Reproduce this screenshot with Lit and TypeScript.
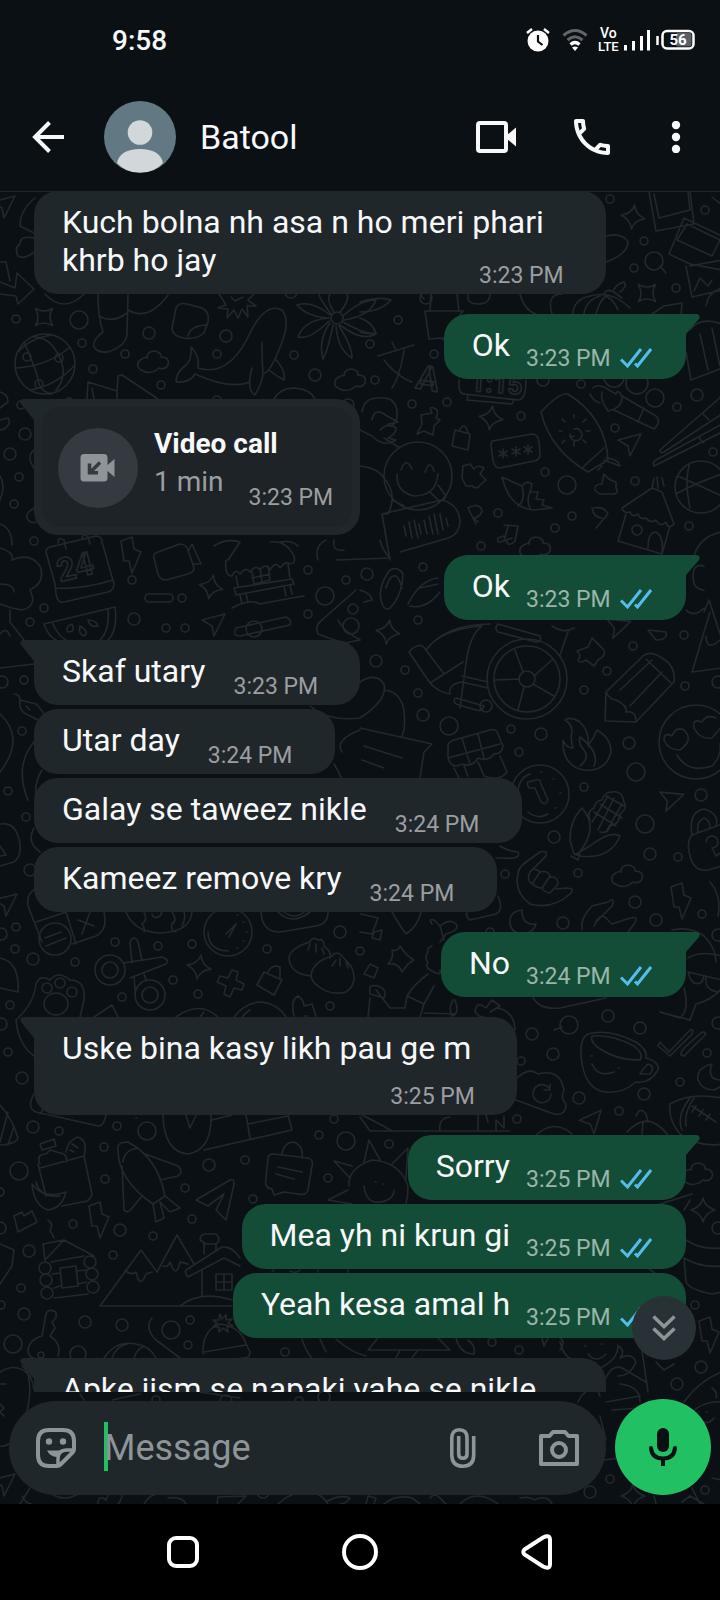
import { LitElement, html, svg, css } from "lit";
import { customElement, property } from "lit/decorators.js";

type Message = {
  side: "in" | "out";
  text: string;
  time: string;
  first?: boolean;
  layout?: "wrap" | "stack";
  call?: boolean;
};

const MESSAGES: Message[] = [
  { side: "in", text: "Kuch bolna nh asa n ho meri phari khrb ho jay", time: "3:23 PM", layout: "wrap" },
  { side: "out", text: "Ok", time: "3:23 PM", first: true },
  { side: "in", text: "Video call", time: "3:23 PM", first: true, call: true },
  { side: "out", text: "Ok", time: "3:23 PM", first: true },
  { side: "in", text: "Skaf utary", time: "3:23 PM", first: true },
  { side: "in", text: "Utar day", time: "3:24 PM" },
  { side: "in", text: "Galay se taweez nikle", time: "3:24 PM" },
  { side: "in", text: "Kameez remove kry", time: "3:24 PM" },
  { side: "out", text: "No", time: "3:24 PM", first: true },
  { side: "in", text: "Uske bina kasy likh pau ge m", time: "3:25 PM", first: true, layout: "stack" },
  { side: "out", text: "Sorry", time: "3:25 PM", first: true },
  { side: "out", text: "Mea yh ni krun gi", time: "3:25 PM" },
  { side: "out", text: "Yeah kesa amal h", time: "3:25 PM" },
  { side: "in", text: "Apke jism se napaki yahe se nikle", time: "3:25 PM", first: true, layout: "wrap" },
];

/* Wallpaper doodles: small rings as [x, y, radius]. */
const RINGS: number[][] = [
  [16,319,4],[79,320,9],[149,333,6],[82,343,4],[125,354,4],[226,336,6],[217,354,4],[294,355,4],[315,375,6],[93,369,4],[161,385,4],[25,434,6],[10,454,6],[19,477,4],[14,504,4],[34,541,4],[291,292,6],[21,405,4],[69,402,4],[217,400,4],[348,405,6],
  [610,199,4],[705,210,4],[644,241,4],[634,268,4],[654,261,9],[676,288,4],[398,320,4],[370,344,4],[375,380,4],[434,354,4],[412,404,4],[447,402,4],[581,384,4],[521,416,4],[615,428,4],[677,407,4],[697,395,6],[655,398,9],[543,380,6],[545,472,4],[567,485,9],[635,481,4],[713,452,4],[498,513,4],[572,516,4],[555,528,4],[689,526,4],[481,546,4],[614,377,10],[637,383,11],[426,298,6],
  [134,619,6],[166,628,4],[185,628,4],[132,580,4],[44,608,4],[30,622,4],[308,570,4],[346,580,4],[325,596,9],[308,614,4],[24,680,4],[22,731,4],[8,791,4],[26,817,4],[30,870,6],[16,927,4],[182,598,4],[2,682,6],[353,609,5],[351,626,8],
  [423,567,4],[367,574,6],[418,620,4],[376,661,6],[405,670,4],[418,693,4],[423,715,6],[449,726,9],[511,729,4],[541,734,6],[519,752,4],[584,690,4],[607,671,4],[633,646,4],[684,635,4],[685,686,4],[718,682,6],[629,743,6],[636,772,9],[584,787,4],[701,795,6],[645,824,9],[554,837,6],[505,874,4],[578,873,4],[650,854,6],[678,857,4],[635,902,6],[702,914,4],[656,920,6],[563,923,6],
  [1,934,6],[15,949,4],[33,959,6],[75,962,4],[115,942,4],[158,946,4],[192,944,4],[173,980,4],[122,997,4],[198,994,4],[267,949,4],[340,932,6],[330,1006,4],[1,1024,6],[10,1005,4],[8,1052,4],[22,1078,6],[33,1127,6],[59,1131,4],[117,1126,4],[147,1131,9],[104,1147,4],[19,1171,9],[105,1179,4],[209,1165,6],[245,1160,4],[185,1188,4],[319,1135,4],[346,1141,9],[328,1178,4],[253,1199,4],[192,1219,4],[120,1230,6],[153,1236,4],[73,1224,4],[29,1251,6],[113,1255,4],[21,1288,4],[334,1119,4],[0,1192,4],[0,1228,6],
  [569,1025,9],[608,1016,6],[640,1028,6],[532,1034,6],[553,1054,6],[521,1061,4],[579,1098,6],[644,1094,6],[619,1111,4],[707,1053,4],[680,1082,4],[517,1119,4],[389,1144,4],[718,1228,6],[718,1023,6],[718,935,6],[360,951,4],[490,932,4],
  [24,1314,6],[13,1344,9],[78,1354,8],[85,1322,6],[122,1325,6],[171,1330,9],[190,1320,4],[188,1345,4],[285,1352,4],[492,1342,4],[519,1350,4],[695,1305,4],[701,1367,6],[677,1384,6],[610,1479,4],[705,1490,4],[590,1492,6],[156,1400,4],[226,1401,6],[299,1401,4],[324,1397,6],[263,1492,6],[1,1305,4],
];
/* Four-pointed sparkles, clouds, bolts and arrowheads as [x, y, rotation]. */
const SPARKS = [[44,317,45],[633,217,8],[491,418,8],[647,293,45],[211,587,12],[388,632,8],[199,967,10],[703,1210,0],[633,1496,0]];
const CLOUDS = [[153,362,0],[350,380,0],[627,876,0],[697,1174,0],[535,548,0]];
const BOLTS = [[130,551,0],[680,897,0],[98,1216,0],[708,1331,0]];
const DARTS = [[214,624,0],[630,444,0],[670,800,20],[4,206,0],[592,1122,-10],[617,627,20],[4,1484,0],[6,904,0]];

/* Free-hand doodles. */
const DOODLES = [
  // globe
  "M15 364a30 30 0 1 0 60 0a30 30 0 1 0-60 0M24 342Q38 374 39 384Q42 392 52 394M33 337Q50 336 60 358Q68 376 56 390M18 352Q30 338 52 335M16 368Q48 366 70 347M30 390Q55 386 74 366M23 357a4 4 0 1 0 8 0a4 4 0 1 0-8 0M55 358a4 4 0 1 0 8 0a4 4 0 1 0-8 0M35 384a4 4 0 1 0 8 0a4 4 0 1 0-8 0",
  // sock, sticker, burst
  "M98 293Q98 318 103 332Q92 340 94 347Q98 353 108 352Q126 346 127 334L128 295M99 316Q112 324 127 313M128 310Q148 322 168 295M45 294Q64 314 84 294",
  "M176 308Q179 302 187 304L202 308Q210 312 208 322L204 333Q196 340 184 338Q172 336 172 328ZM188 336Q190 326 206 325",
  "M219 294L226 305L218 308L228 309L227 318L234 310L238 318L242 309L248 317L247 306L256 306L248 300L254 294M231 297L235 301L243 297",
  // whale
  "M191 347Q200 356 198 368Q230 378 251 331Q266 302 282 310Q292 322 278 352Q270 372 263 374Q262 383 255 395Q246 390 252 368M191 347Q192 360 186 365Q176 372 176 382Q190 383 195 374Q230 390 250 382M262 342Q262 360 263 374M275 359Q286 370 284 380Q276 376 269 370",
  // flower
  "M331 318a6 6 0 1 0 12 0a6 6 0 1 0-12 0M331 314Q318 296 319 294M334 312Q326 300 330 294M340 312Q350 300 347 294M343 316Q360 300 376 300Q370 316 344 320M343 322Q364 334 376 334Q362 342 340 325M339 326Q352 346 352 358Q338 350 336 326M333 325Q328 350 323 359Q318 340 330 323M329 321Q310 340 298 337Q304 320 329 318M330 315Q312 300 297 305Q306 316 326 318",
  // open box and arrow on the left edge
  "M0 282L15 288L17 273L34 289L18 304L16 296L0 294M0 262L6 262L10 281M35 198Q20 210 20 226L34 233M34 238Q20 235 20 244Q14 248 18 256Q24 260 34 252M0 392Q8 394 8 402L0 408M0 420L8 418Q12 424 4 429L0 430M0 476Q6 486 0 500M34 508Q24 514 28 520Q32 524 36 522M34 450Q26 456 34 468M0 524Q12 528 12 545",
  // cat ears
  "M87 399L88 382L117 391L118 376L122 375L158 399M117 391L117 399M94 399L92 388M274 399Q280 388 294 388Q310 389 315 399",
  // photo frames
  "M649 192L656 231L694 224L690 192M654 194L659 218L690 210L688 192M684 218L722 236M684 218L669 254L690 264L722 270M687 224L720 240L712 256L677 240ZM686 266L692 297L722 290M694 291L700 278L708 286L712 280M690 266L722 260M706 306Q708 292 722 288M712 197L722 205",
  "M660 266L666 273M606 236Q622 232 628 242Q628 254 606 262",
  // pumpkin
  "M573 314Q573 300 590 296Q612 290 630 308M584 314Q586 300 600 296M596 314Q600 300 606 296M618 310Q614 300 606 296M604 294Q606 288 614 292L622 298M614 290Q616 284 624 282Q628 286 620 292",
  "M652 314L664 306L682 303L681 316M552 314Q546 294 562 294M520 294Q524 310 536 314M468 294Q466 304 478 304Q490 304 490 294",
  // pot plant
  "M431 294L430 311L459 311L457 294M425 311L463 311L443 340M425 311L429 339L443 338M424 299Q420 296 422 294M360 302Q380 296 391 300Q380 312 360 312M360 318Q372 322 376 333Q366 334 360 332",
  // drink glass
  "M690 330Q700 316 722 324M686 352L691 380L722 368M700 334L708 370M712 328L720 366",
  // chat faces
  "M362 412Q364 398 378 398Q396 396 397 412Q398 424 390 426M360 430L372 436Q384 448 396 440L388 438Q396 434 396 428Q388 422 380 430M372 420Q374 408 384 414Q390 418 398 422L388 424M384 438L400 448",
  "M384 476a34 34 0 1 0 68 0a34 34 0 1 0-68 0M401 470Q406 456 412 469M425 472Q430 458 434 471M397 474Q396 492 414 496Q436 496 438 474M430 492L438 500Q444 502 446 496L438 485M360 466Q378 468 384 478Q398 494 388 514L382 514L390 560M382 514L442 500Q458 504 460 520Q460 534 448 538L400 552M404 526l2 10M409 522l3 16M414 520l4 18M419 524l2 10M424 520l3 14M429 516l4 18M434 514l4 20M440 514l3 16M446 518l2 8M392 500L404 506",
  // clock frame beneath the reply
  "M459 380Q458 394 464 394L518 400Q526 400 526 380M468 395L467 400L512 404L514 399",
  // pin, padlock, password
  "M432 413Q428 406 434 408Q440 410 436 418L440 420L434 426L433 435L424 431L417 434L422 424L421 415ZM455 430L470 434L468 450L452 446ZM460 430Q462 424 466 427L468 433M492 441L532 434Q538 434 539 442L540 454Q540 460 534 461L500 468Q494 468 493 460L491 446Q491 442 492 441M503 449v9M499 451l8 5M507 451l-8 5M516 447v9M512 449l8 5M520 449l-8 5M528 445v9M524 447l8 5M532 447l-8 5",
  // surfboard
  "M541 412Q560 392 568 394Q606 418 608 460L588 472Q550 450 541 412M582 468L604 448M574 429a6 6 0 1 1-4 5Q570 438 574 436M574 418v-3M574 442v4M562 431h-3M586 431h4M565 422l-3-3M583 422l3-3M565 440l-3 3M583 440l3 3M604 460L620 466L618 462Q612 458 606 458M602 466L598 470",
  // plaster
  "M593 388Q596 384 604 387L616 394Q618 388 622 397Q622 408 608 411Q600 400 602 392M590 394Q592 400 600 403M622 396L656 416Q662 422 654 429L614 410M644 408L638 422",
  // puzzle, shell, notes, pins
  "M463 466L470 464L474 469Q478 464 484 468L480 474L486 480L480 485Q478 490 472 486L466 486L462 478ZM503 480Q500 476 504 478L522 486Q526 480 532 484L530 492L538 492L536 499L544 500L542 505L552 508L534 510Q510 508 503 480M522 486Q526 500 518 506M530 492Q526 500 530 508",
  "M504 525L518 526L515 541Q508 548 506 540L512 538M508 526L504 541Q496 544 498 538L504 536M468 508Q478 502 482 510Q482 516 474 518L478 522M468 508L476 524M594 508Q604 506 608 514L596 528M592 508Q594 518 602 518",
  "M595 490Q594 484 602 484L604 474Q608 480 616 482L616 488Q620 494 612 494L600 494Q596 492 595 490",
  // chopsticks, basketball
  "M722 396L660 450Q660 454 664 452L722 414M722 432L654 466Q652 462 656 460L722 424M703 414l6 6M698 437l6 6M675 487a26 26 0 1 0 52 0a26 26 0 1 0-52 0M690 463Q684 480 690 508M678 476L722 496M676 494Q694 484 722 474",
  // hut
  "M652 488L654 478M658 488L657 477M664 486L662 478M652 488L662 492L674 524Q668 530 666 522Q660 528 656 520Q650 524 646 518Q640 520 638 514Q632 518 630 512Q624 514 622 508L652 488M626 514L618 541L662 554L670 526M632 530a5 5 0 1 0 10 0a5 5 0 1 0-10 0M648 548Q648 532 656 532Q664 536 662 554M694 556Q700 536 722 532",
  // calendar
  "M55 584L46 552Q46 548 50 547L96 536Q102 536 102 542L114 584Q114 590 108 592L64 602Q58 604 56 594ZM56 588Q80 590 113 580M58 543Q58 536 64 540L66 549M82 538Q84 532 88 537L90 544",
  // camera, watermelon, pill
  "M154 558Q152 554 158 552L180 544Q186 544 188 550L194 568Q194 572 188 574L166 580Q160 580 158 574ZM188 552L192 544L201 564L194 564M44 624L115 607Q118 630 108 640M44 624Q48 636 56 640M52 622Q58 636 66 640M108 609Q110 630 100 640M72 624Q64 628 68 632Q76 632 72 624M80 626Q78 634 84 636Q90 632 80 626M88 620Q90 628 98 626Q96 620 88 620",
  "M149 594h20a4 4 0 0 1 0 8h-20a4 4 0 0 1 0-8M236 628L286 617Q292 620 290 625L240 636Q232 636 236 628M246 629a8 8 0 1 0 16 0a8 8 0 1 0-16 0M0 584Q14 584 14 592M0 548Q14 552 12 560Q30 552 40 566Q46 582 30 590Q38 606 22 610L12 608L0 604M10 610L10 622L24 640M0 634Q6 626 10 636",
  // beach bar
  "M214 546Q226 538 240 542L228 560M226 560Q224 576 232 576Q236 568 240 574Q246 566 250 572Q256 564 260 570Q266 562 270 570Q276 560 280 568Q286 560 290 564Q296 564 294 556Q286 540 270 542M236 576L238 586M288 564L290 578M252 572L254 584L270 580L268 566M260 568L262 582M252 578L270 574M234 588L292 579L294 584L236 595ZM240 595L242 604M246 594L248 602M284 586L286 596M290 585L292 594M232 608Q250 598 260 604Q280 600 304 596M280 542Q292 540 298 546",
  // rocks and bottle
  "M318 560Q314 546 326 540M334 540Q332 552 344 550M336 560L390 558Q382 550 380 540M318 634Q314 626 322 620L356 590M338 620Q342 630 360 640M318 634L340 642",
  // sandals
  "M381 600Q378 586 390 570Q398 566 403 574Q402 596 390 608Q384 612 381 600M386 588Q390 574 396 576Q400 580 402 588M408 604Q420 580 438 578M410 606Q426 610 440 592M420 588L438 584M360 590Q372 594 372 600L364 602",
  // vegetables under the left column
  "M0 714Q26 738 0 772M14 694Q20 694 20 700Q18 712 30 716L38 720M20 700L36 704Q44 712 46 718M26 706l4 4M34 742Q14 766 28 800M42 770Q34 782 36 800M0 824Q14 822 18 836Q24 854 14 862L0 866M0 846L6 855L0 856M34 828Q26 842 40 852M0 668L34 664",
  // cap and wheelchair
  "M409 652Q420 640 426 650Q440 630 480 626M409 652L430 683L463 662M426 650L444 674M426 650Q446 624 490 624M460 708L466 663Q470 634 482 626M430 683Q438 692 450 694Q448 684 462 682L488 688M462 676L488 682M456 698L484 706Q482 712 476 710L456 704Q452 700 456 698M480 706a6 6 0 1 0 12 0a6 6 0 1 0-12 0M498 624L540 636Q542 642 536 642L498 632Q494 628 498 624",
  "M487 679a40 40 0 1 0 80 0a40 40 0 1 0-80 0M494 679a33 33 0 1 0 66 0a33 33 0 1 0-66 0M519 679a8 8 0 1 0 16 0a8 8 0 1 0-16 0M519 679L494 680M523 672L515 650M534 676L552 660M533 684L554 696M524 687L518 710M568 632L560 655M552 626Q564 634 574 628",
  // puzzle, pencil
  "M577 651L588 647L592 638L604 650Q606 656 598 660L594 666L586 660Q580 664 578 660Q582 656 577 651M605 721L606 692L643 656Q650 650 662 658Q676 666 674 682L636 722ZM606 692Q610 700 616 700Q628 706 626 712Q636 710 636 722M646 659L672 684M620 690L652 660M630 706L662 672M648 630L666 632Q668 640 656 640Z",
  // tree
  "M709 600L722 640M709 600L704 612M710 612L692 672L722 668M706 636Q706 652 720 640M686 610Q694 618 704 608M704 566Q690 562 694 584Q698 590 704 590",
  // heart card
  "M360 682Q376 672 384 684Q388 700 360 718M384 690Q408 692 404 730L402 736M360 728L432 744L424 752L420 778M364 746L402 758M362 760L384 768M330 646L360 640M334 764Q344 780 344 790M342 752Q334 740 360 730M310 706Q330 722 360 718",
  // gift
  "M448 746Q448 742 454 740L490 730Q496 728 498 734L503 746Q502 754 494 754Q488 762 478 758Q472 768 462 764Q452 770 448 758ZM462 738L470 764M478 734L484 758M448 758L500 744M454 768L460 780M500 756L507 772Q500 782 484 776L478 762M464 766L468 776",
  // flame
  "M565 720Q570 716 580 722Q590 732 588 746Q594 738 597 730Q611 738 611 752Q606 772 584 770Q562 766 563 740Q566 748 573 748Q570 738 572 732Q572 724 565 720M580 737Q578 744 584 750Q590 758 580 766M580 737Q600 752 594 766",
  // heart-eyes emoji
  "M659 742a37 37 0 1 0 74 0a37 37 0 1 0-74 0M664 740Q664 732 672 736Q676 726 684 730Q694 740 680 750Q668 750 664 740M694 728Q692 718 702 722Q706 714 716 718M694 728Q700 740 712 738L722 726M677 755Q688 774 712 766Q722 756 720 744",
  // clock coin
  "M511 794a29 29 0 1 0 58 0a29 29 0 1 0-58 0M528 782L536 780Q540 778 541 784L548 800Q546 806 541 802L535 788L530 788Q526 786 528 782M518 794Q518 778 530 774M528 812Q538 820 548 814M541 772h1M553 779h1M560 793h1M555 808h1",
  // corn
  "M582 808Q570 820 570 840L574 854L580 856Q610 860 620 836Q610 830 590 846L576 854M582 808Q600 828 578 854M590 820Q586 812 594 808Q596 800 602 800Q604 792 612 792Q622 790 624 802Q628 808 620 814Q620 824 610 826Q608 834 600 832M594 812L616 826M600 804L622 818M606 796L624 806M598 830L614 798M592 822L608 796M606 832L622 804M571 856L578 860L580 854",
  // lock
  "M692 835Q688 812 704 809Q720 814 716 826M698 832Q696 822 704 818Q710 820 710 828M692 835L722 824M692 835Q686 842 690 856Q694 872 708 870L722 866M706 842a6 6 0 1 1 6 6L716 856L722 852",
  // hands
  "M518 874Q518 868 526 862L540 852Q548 850 546 856L530 872M518 874Q514 892 530 904Q552 910 570 894Q576 888 566 888L556 889M530 872Q534 866 540 872L532 884Q526 880 530 872M540 872Q548 870 550 876L542 888Q536 888 533 884M550 877Q558 876 558 884L550 893Q544 892 542 888M582 930Q580 918 592 906L608 902Q616 896 612 906L596 922M594 926Q600 912 606 918L612 924L630 918Q640 916 634 924L622 940",
  "M500 846Q510 852 518 852Q522 860 500 858L496 858M498 896Q504 910 496 914L470 920Q464 916 468 910M392 912Q400 926 406 934Q418 926 421 912M710 882Q722 896 718 916",
  // crescents
  "M522 910Q508 912 510 924Q512 934 524 934Q534 932 536 924Q522 926 522 910M712 1064Q696 1068 698 1080Q702 1090 714 1090L722 1086M712 1064Q706 1080 722 1080",
  // capsule
  "M28 906Q26 890 40 888M28 906L42 942M36 922L66 912M39 939a16 16 0 1 0 32 0a16 16 0 1 0-32 0M45 938L61 932M46 946L66 938M66 912L76 944M104 912Q108 930 96 936L72 944M78 920L94 926M90 912L82 934M0 958Q20 962 18 992L0 988",
  // egg, stopwatch, camera
  "M126 912Q134 932 160 933Q190 932 192 912M144 912Q148 920 142 924Q146 930 144 932M152 914Q154 920 160 916Q164 912 158 910M172 912Q178 920 172 924Q170 930 176 932M184 912Q186 920 182 926M204 932a24 24 0 1 0 48 0a24 24 0 1 0-48 0M208 932Q208 950 228 951M226 934L236 924M229 937L236 924M237 915h1M243 922h1M246 932h1M243 941h1M237 948h1M261 912Q262 932 280 932L316 926Q328 924 328 912M278 912Q292 926 310 912M284 912Q294 920 304 912",
  // dumplings
  "M311 976Q290 974 289 958Q290 948 310 942Q312 936 318 940Q324 938 324 946Q332 952 330 958M311 976Q312 962 332 956Q336 950 342 956Q348 962 352 968Q358 984 346 992Q330 996 318 986Q312 982 311 976M310 944l-2 6M316 944v8M322 948l2 6M336 960l-4 6M340 958v8M346 962l2 6",
  // scissors
  "M95 970a15 15 0 1 0 30 0a15 15 0 1 0-30 0M102 970a8 8 0 1 0 16 0a8 8 0 1 0-16 0M135 995a15 15 0 1 0 30 0a15 15 0 1 0-30 0M142 995a8 8 0 1 0 16 0a8 8 0 1 0-16 0M124 963L162 957Q170 960 166 964L130 978M132 963L130 942Q134 934 138 942L142 960M135 990L134 976M146 980L144 974",
  // plus, tag, blocks
  "M232 970L238 972L236 980L244 984L242 990L234 988L230 997L224 994L226 986L217 982L220 976L228 978ZM264 972L282 980L274 995L257 985ZM268 972Q272 964 280 967L280 978M361 914L378 918L372 934L360 932M374 932L382 930L380 940L372 938ZM370 964L378 968L374 978L364 974ZM294 1016Q290 1000 298 996Q304 1000 304 1006L312 1004L316 1016M304 1016h3",
  "M400 946Q404 952 408 956L414 960L408 964L402 972Q398 962 388 964Q394 958 392 950Q398 952 400 946",
  // paw
  "M16 1020Q34 1004 36 984Q40 974 50 980Q58 970 70 980Q86 980 84 1000L80 1017M42 988a5 5 0 1 0 10 0a5 5 0 1 0-10 0M55 983a5 5 0 1 0 10 0a5 5 0 1 0-10 0M67 992a5 5 0 1 0 10 0a5 5 0 1 0-10 0M44 1004a12 11 0 1 0 24 0a12 11 0 1 0-24 0M16 1020Q18 1044 34 1056M94 1017L112 1005L118 1017M176 1017Q200 1000 218 1017M234 1017Q246 1002 262 1002Q278 1004 286 1017M200 1017L204 1012M250 1010Q246 1012 242 1017",
  // person juggling
  "M432 924Q428 918 434 920L440 926Q450 918 456 924Q460 930 446 934L440 942M440 926L444 940M432 946Q426 948 428 952Q424 958 428 962Q424 968 434 972Q442 976 440 970M428 974Q414 984 407 996L424 1004L434 986M407 996L405 1008L390 1008L376 990M424 1004L420 1017M370 990Q368 984 378 986Q388 990 384 998L370 994ZM368 1017L370 998M455 1014L424 1013M453 1000Q448 1008 452 1016Q460 1014 455 1000M475 1012Q476 1000 486 1008L492 1000L500 1006L490 1012M496 1008Q514 1010 515 1030M475 1012Q480 1018 484 1017",
  "M533 998Q540 1010 560 1008L606 998",
  // dancer at the right edge
  "M672 930Q690 926 704 936Q716 948 716 962M688 958Q700 950 722 956M688 972L722 980M688 972Q692 988 702 982L704 976M684 988Q690 1010 680 1018L660 1012M660 1012L690 1020L696 1004Q712 1000 722 988M706 976Q704 990 718 992",
  // cup
  "M581 1056Q580 1038 588 1034Q608 1028 636 1042Q648 1050 646 1058Q660 1062 658 1070Q650 1084 636 1082Q622 1094 606 1092Q584 1090 581 1056M592 1036Q612 1034 634 1046Q644 1054 640 1060Q614 1060 596 1046Q590 1040 592 1036M591 1056h1M618 1068h1M592 1064Q598 1078 614 1072M648 1064Q642 1070 640 1074L650 1074Q656 1066 648 1064M554 1030L562 1027",
  // ticks, football
  "M660 1042L669 1052L690 1030Q694 1028 692 1034L670 1056L658 1046ZM684 1048L702 1032Q708 1032 704 1036L684 1056Q678 1056 684 1048M670 1104Q690 1092 722 1098M670 1104Q668 1120 680 1134Q700 1148 722 1144M690 1098Q676 1116 682 1130M694 1098Q684 1112 686 1126M692 1106L716 1122M696 1106l-4 6M703 1110l-4 6M710 1114l-4 6",
  // cloud with reload
  "M515 1080Q528 1066 538 1074Q560 1068 564 1090Q560 1098 566 1104Q566 1116 554 1114L516 1100M549 1088a9 9 0 1 0 2 6M544 1090L550 1090L550 1084M535 1136Q554 1118 572 1134M627 1132Q640 1118 652 1122Q664 1128 668 1136M636 1116Q640 1106 646 1114L648 1122M643 1122L642 1134",
  // pencil case, surf strip, skater
  "M34 1094Q26 1108 36 1112L98 1126Q104 1126 106 1115M40 1114L44 1108M163 1115Q164 1152 188 1154Q212 1150 211 1115M186 1115L190 1128L196 1115M204 1150L292 1130L288 1115M212 1120L232 1115M246 1115L250 1138M248 1124L288 1116M136 1118h1M360 1117L370 1131L509 1131M362 1115Q380 1124 392 1131M440 1131Q438 1118 450 1117M478 1131L478 1115M486 1115L488 1122M496 1131L496 1120L504 1128L504 1116",
  // tent
  "M0 1105Q12 1118 18 1138Q16 1144 0 1145M0 1142L8 1112M8 1145L14 1126",
  // school bag
  "M40 1164Q36 1154 46 1154L50 1150L64 1154Q68 1158 66 1162M40 1144L54 1139L56 1146L42 1150ZM66 1152Q68 1140 78 1137Q88 1140 84 1156M72 1144l6 4M70 1150l4 2M40 1168L84 1156L92 1194Q90 1202 82 1202L62 1206M38 1164L46 1196M32 1184Q44 1200 66 1192Q62 1208 48 1210Q34 1206 32 1184M36 1182Q40 1198 60 1196",
  // rocket
  "M118 1150Q116 1142 128 1142Q158 1158 165 1196L153 1204Q118 1180 118 1150M123 1162Q124 1150 138 1148M145 1154L178 1166Q184 1172 178 1176L160 1180M122 1166L124 1210Q128 1214 132 1208L142 1196M153 1204L156 1222L164 1218L160 1202L170 1212L180 1208L165 1196",
  // paper plane, chat card, sun
  "M196 1200L230 1180Q234 1178 234 1184L226 1220L216 1210L224 1194L208 1206ZM268 1158Q268 1154 274 1154L308 1158Q314 1160 312 1166L308 1190Q306 1196 298 1194L284 1192L274 1195L272 1189Q264 1188 266 1178ZM282 1154Q284 1142 294 1142Q304 1146 302 1158M278 1167L302 1172M276 1174L294 1179M349 1186Q348 1168 372 1160Q400 1162 408 1186Q408 1196 406 1204M352 1166L334 1161L350 1178M348 1190L328 1200L352 1204M364 1162L369 1140L380 1160M392 1164L408 1148L406 1178M364 1186Q366 1204 380 1202Q394 1200 394 1190M375 1182h1M383 1184h1",
  // gloves, squiggle, log house
  "M14 1216L22 1212L24 1216L32 1211L37 1222L18 1232ZM48 1220Q54 1224 50 1230L54 1238M43 1244L64 1240L94 1256M43 1244L45 1260L64 1240M39 1268a6 6 0 1 0 12 0a6 6 0 1 0-12 0M40 1280a6 6 0 1 0 12 0a6 6 0 1 0-12 0M41 1293a6 6 0 1 0 12 0a6 6 0 1 0-12 0M84 1262a6 6 0 1 0 12 0a6 6 0 1 0-12 0M86 1274a6 6 0 1 0 12 0a6 6 0 1 0-12 0M87 1287a6 6 0 1 0 12 0a6 6 0 1 0-12 0M51 1262L84 1256M52 1274L60 1273M76 1271L86 1270M54 1288L60 1286M78 1284L86 1282M54 1298L88 1294M60 1268L76 1266L78 1286L62 1288ZM0 1244L14 1250L12 1266L0 1284",
  // mountains and house
  "M100 1306L141 1250L157 1272L177 1235L194 1264M100 1306L232 1306M125 1270Q130 1276 136 1272Q140 1290 146 1274L152 1272M163 1266Q168 1268 170 1262Q176 1280 180 1262L188 1264M186 1270L222 1247Q232 1246 240 1258M188 1277Q182 1270 190 1268M188 1277L224 1258L240 1266M202 1270L202 1297M216 1274L232 1274L232 1290L216 1290ZM224 1274L224 1290M216 1282L232 1282M204 1254L204 1244L216 1244L216 1250M200 1240Q200 1234 206 1234L216 1234Q222 1240 216 1244L206 1244ZM180 1306Q200 1290 232 1300",
  // key, scarf, beanie
  "M46 1314Q48 1308 56 1312L56 1318L52 1322L55 1328L50 1336Q62 1344 58 1356M42 1336Q28 1340 28 1352Q30 1358 34 1358M42 1336L46 1314M38 1355a3 3 0 1 0 6 0a3 3 0 1 0-6 0M152 1318Q144 1328 156 1340L180 1358M104 1358Q116 1340 136 1344Q150 1346 156 1358M112 1358Q116 1346 128 1344M134 1358Q136 1350 144 1346M203 1354Q202 1330 220 1324Q240 1326 246 1344L250 1352Q250 1358 244 1358L204 1362M204 1352L246 1345M220 1314l2 5 4-4 0 5 6-1-4 4 5 3-6 1 1 5-5-4-4 4 0-5-6 0 4-4-4-3 6 0Z",
  "M302 1339Q306 1352 312 1358M320 1339L326 1352M336 1339Q350 1352 366 1356M368 1350L450 1350L438 1338M378 1338L368 1350M456 1338Q460 1354 474 1354Q476 1346 468 1340M400 1350L396 1358M418 1350L412 1358M542 1338L544 1346L548 1338",
  // dog mascot at the left
  "M0 1372Q16 1362 28 1374Q34 1400 20 1430Q10 1448 0 1446M0 1384L6 1384M0 1404l4 4-4 4 4 4M22 1366Q32 1374 34 1390M84 1400L80 1394M112 1400L140 1394M200 1392L240 1398",
  // children
  "M560 1342Q564 1356 570 1358Q580 1370 600 1368Q618 1360 618 1345M585 1346h1M601 1344h1M588 1354Q596 1364 606 1354M618 1346Q626 1350 620 1358Q632 1352 636 1362Q630 1376 618 1376M606 1378Q612 1364 622 1368L646 1382M641 1344L648 1392M656 1362L664 1370L674 1364M606 1378L596 1386L600 1396M620 1384Q640 1386 640 1402M578 1402Q582 1392 590 1390M606 1402L640 1396M612 1410L640 1408L644 1440M600 1416L606 1440M604 1460L620 1458M560 1338Q566 1342 560 1350M684 1402Q700 1380 722 1372M690 1414Q704 1400 722 1402M698 1412h1M706 1412h1M700 1420Q708 1426 714 1418M712 1388Q718 1392 716 1398M712 1478L722 1480M692 1488L700 1504M682 1502L690 1496L704 1504M654 1496L656 1504",
  // buckets at the right edge
  "M686 1240Q700 1250 722 1248M684 1258Q700 1268 722 1266M684 1258L686 1282Q690 1290 712 1294L722 1292M690 1200L684 1210M660 1204L692 1194M648 1268L656 1274M272 1272L274 1270M290 1271Q296 1274 300 1270M318 1272L318 1270M348 1272L348 1270",
  // strip under the composer
  "M20 1504L30 1488M22 1496Q26 1504 32 1504M52 1494Q64 1502 78 1494M98 1504Q98 1494 106 1500Q110 1492 104 1492M122 1494Q122 1500 118 1504M144 1504Q150 1492 166 1494M168 1498Q182 1496 186 1504M217 1504L218 1497L246 1496L238 1504M278 1504Q292 1490 312 1492Q324 1496 328 1504M326 1502Q340 1494 350 1498Q346 1504 340 1504M366 1504L368 1496L376 1498L374 1504M384 1504Q396 1494 412 1498L420 1504M430 1498Q434 1492 440 1498L446 1504M460 1504Q476 1488 498 1504M520 1498Q530 1496 534 1500Q548 1494 552 1504",
];

const spark = ([x, y, r]: number[]) =>
  svg`<path transform="translate(${x} ${y}) rotate(${r})" d="M0-12Q2-3 12 0Q2 3 0 12Q-2 3-12 0Q-2-3 0-12Z" />`;
const cloud = ([x, y]: number[]) =>
  svg`<path transform="translate(${x} ${y})" d="M-10 9Q-18 6-14-1Q-8-6-6-4Q-6-11 2-11Q9-9 8-5Q17-5 15 3Q12 8 6 6Q-2 13-10 9Z" />`;
const bolt = ([x, y]: number[]) =>
  svg`<path transform="translate(${x} ${y})" d="M-9-10L2-14L4-2L11 1L2 22L-1 10L-6 10Z" />`;
const dart = ([x, y, r]: number[]) =>
  svg`<path transform="translate(${x} ${y}) rotate(${r})" d="M-12-4L11-10L0 12L-2 2Z" />`;

@customElement("chat-wallpaper")
export class ChatWallpaper extends LitElement {
  static styles = css`
    :host { display: block; position: absolute; inset: 0; overflow: hidden; }
    .art { display: block; width: 100%; height: 100%; fill: none; stroke: #22292d; stroke-width: 1.6; stroke-linecap: round; stroke-linejoin: round; }
    .lettering { font-family: Roboto, sans-serif; font-weight: 700; }
  `;
  render() {
    return html`
      <svg class="art" viewBox="0 191 720 1313" preserveAspectRatio="xMidYMin slice" aria-hidden="true">
        ${RINGS.map(([x, y, r]) => svg`<circle cx=${x} cy=${y} r=${r} />`)}
        ${SPARKS.map(spark)}${CLOUDS.map(cloud)}${BOLTS.map(bolt)}${DARTS.map(dart)}
        ${DOODLES.map((d) => svg`<path d=${d} />`)}
        <g class="lettering">
          <text x="60" y="582" font-size="32" transform="rotate(-14 60 582)">24</text>
          <text x="470" y="391" font-size="26" transform="rotate(4 470 391)">1:15</text>
          <text x="415" y="388" font-size="34" transform="rotate(10 415 388)">A</text>
        </g>
        <path d="M378 356L414 345M392 342L396 350M404 350Q400 376 392 388M384 360Q396 376 412 382" />
      </svg>
    `;
  }
}

@customElement("chat-bubble")
export class ChatBubble extends LitElement {
  @property({ attribute: false }) message!: Message;

  static styles = css`
    :host { display: flex; }
    p { margin: 0; }
    time { display: block; min-width: 86px; }
    .bubble {
      position: relative; display: flex; box-sizing: border-box; max-width: calc(100% - 80px);
      padding: 12px 41px 5px 28px; border-radius: 24px; background: #20272a; color: #f7f8fa;
    }
    .out { margin-left: auto; gap: 16px; padding: 12px 34px 7px 28px; background: #144d37; }
    .in { gap: 28px; }
    .in.first { border-top-left-radius: 0; }
    .out.first { border-top-right-radius: 0; }
    .text { font-size: 32px; line-height: 38px; padding-bottom: 10px; }
    .out .text { padding-bottom: 8px; }
    .meta { display: flex; align-items: center; gap: 8px; align-self: flex-end; font-size: 23px; line-height: 27px; color: #9b9ea0; white-space: nowrap; }
    .out .meta { color: #9ab5a9; }
    .wrap { width: 100%; }
    .wrap .text { flex: 1; display: flow-root; padding-bottom: 0; }
    .wrap .meta { float: right; margin-top: 21px; }
    .stack { flex-direction: column; gap: 6px; }
    .stack .text { margin-right: 5px; }
    .tail { position: absolute; top: 0; width: 15px; height: 21px; }
    .in .tail { left: -14px; fill: #20272a; }
    .out .tail { right: -14px; fill: #144d37; }
    .ticks { width: 32px; height: 20px; margin-bottom: 2px; fill: none; stroke: #53bdeb; stroke-width: 3; }
    .bubble.call { padding: 8px; }
    .card {
      display: grid; grid-template-columns: 80px auto auto; grid-template-rows: 38px 38px 10px;
      column-gap: 16px; padding: 18px 17px 16px 16px; border-radius: 18px; background: #1e2327;
      font-size: 28px; line-height: 38px;
    }
    .disc { grid-row: 1 / 4; align-self: center; display: grid; place-items: center; width: 80px; height: 80px; border-radius: 50%; background: #353940; }
    .disc svg { width: 36px; height: 28px; }
    .title { grid-column: 2 / 4; font-weight: 700; }
    .length { color: #9b9ea0; }
    .card .meta { grid-row: 2 / 4; grid-column: 3; margin-left: 9px; }
  `;

  private tail(side: string) {
    return side === "in"
      ? html`<svg class="tail" viewBox="0 0 15 21" aria-hidden="true"><path d="M15 0H3Q-1 1 1 5L14 21H15Z" /></svg>`
      : html`<svg class="tail" viewBox="0 0 15 21" aria-hidden="true"><path d="M0 0H12Q16 1 14 5L1 20H0Z" /></svg>`;
  }

  render() {
    const m = this.message;
    const meta = html`<span class="meta"><time>${m.time}</time>${m.side === "out"
      ? html`<svg class="ticks" viewBox="0 0 32 20" role="img" aria-label="Read"><path d="M1 11.500L7.500 18L21 1M15 15.500L17.500 18L31 1" /></svg>`
      : null}</span>`;
    if (m.call) {
      return html`
        <div class="bubble in first call">
          ${this.tail("in")}
          <div class="card">
            <span class="disc">
              <svg viewBox="0 0 36 28" aria-hidden="true">
                <path fill="#8d9598" d="M4 0H24Q27.500 0 27.500 3.500V11L34.500 5V23L27.500 17V24Q27.500 27.500 24 27.500H4Q.5 27.500 .5 24V3.500Q.5 0 4 0Z" />
                <path fill="none" stroke="#353940" stroke-width="3.500" d="M20 8.500L10 18.500M9.500 9.500V18.800H18" />
              </svg>
            </span>
            <p class="title">${m.text}</p>
            <p class="length">1 min</p>
            ${meta}
          </div>
        </div>`;
    }
    const wraps = m.layout === "wrap";
    return html`
      <div class="bubble ${m.side} ${m.first ? "first" : ""} ${m.layout ?? ""}">
        ${m.first ? this.tail(m.side) : null}
        <p class="text">${m.text}${wraps ? meta : null}</p>
        ${wraps ? null : meta}
      </div>`;
  }
}

@customElement("app-root")
export class AppRoot extends LitElement {
  static styles = css`
    :host { display: flex; flex-direction: column; height: 100vh; background: #0b1014; color: #f7f8fa; font-family: Roboto, sans-serif; overflow: hidden; }
    button, input { font: inherit; color: inherit; background: none; border: 0; padding: 0; margin: 0; outline: none; }
    button { display: grid; place-items: center; flex: none; }
    svg { display: block; }
    .top { position: relative; z-index: 1; background: #0b1014; box-shadow: 0 1px #20272a; }
    .status { display: flex; align-items: center; height: 82px; padding: 0 25px 0 112px; }
    .clock { flex: 1; font-size: 28px; line-height: 32px; font-weight: 500; }
    .header { display: flex; align-items: center; height: 109px; padding: 0 36px 0 32px; box-sizing: border-box; }
    .avatar { width: 72px; height: 72px; margin: 0 24px 0 40px; }
    .name { flex: 1; margin: 0; font-size: 34px; line-height: 40px; font-weight: 400; }
    .calls { display: flex; align-items: center; gap: 58px; }
    .chat { position: relative; flex: 1; min-height: 0; display: flex; flex-direction: column; }
    .list { position: relative; flex: 1; min-height: 0; overflow: hidden; display: flex; flex-direction: column; gap: 4px; padding: 0 34px; margin-bottom: 9px; }
    .list > * { flex: none; }
    .list > .lead { margin-top: 16px; }
    .composer { position: relative; display: flex; align-items: flex-end; gap: 9px; padding: 0 9px 9px; margin-top: -2px; }
    .field { flex: 1; min-width: 0; display: flex; align-items: center; height: 94px; padding: 0 27px; border-radius: 47px; background: #20272a; box-sizing: border-box; }
    .caret { width: 4px; height: 49px; margin-left: 28px; margin-bottom: 4px; background: #21c063; }
    .entry { flex: 1; min-width: 0; height: 49px; margin-left: -4px; font-size: 36px; }
    .entry::placeholder { color: #8d9598; opacity: 1; }
    .camera { margin-left: 63px; }
    .mic { width: 96px; height: 96px; border-radius: 50%; background: #21c063; }
    .jump { position: absolute; right: 24px; bottom: 144px; width: 64px; height: 64px; border-radius: 50%; background: #273136; }
    .nav { display: flex; align-items: center; justify-content: space-around; height: 96px; padding: 0 96px; background: #000; }
  `;

  render() {
    return html`
      <div class="top">
        <div class="status">
          <time class="clock">9:58</time>
          <svg width="170" height="28" viewBox="0 0 170 28" fill="none" aria-label="Alarm, Wi-Fi, VoLTE, signal, battery 56 percent" role="img">
            <circle cx="13" cy="14" r="10.500" fill="#fff" />
            <path stroke="#fff" stroke-width="2.500" d="M2 6L7 2M24 6L19 2" />
            <path stroke="#0b1014" stroke-width="2.200" d="M13 8V14.500L17.500 18" />
            <path stroke="#62666a" stroke-width="3" d="M38.500 8.500Q50 -1.500 61.500 8.500M42.500 13Q50 6.500 57.500 13" />
            <path stroke="#fff" stroke-width="3.200" d="M45.500 17.500Q50 13.500 54.500 17.500" />
            <path fill="#fff" d="M47 20.500Q50 18.500 53 20.500L50 24Z" />
            <g fill="#fff" font-family="Roboto, sans-serif" font-weight="500">
              <text x="75" y="11" font-size="14">Vo</text>
              <text x="73" y="24" font-size="13">LTE</text>
            </g>
            <path stroke="#fff" stroke-width="3" d="M100.500 18V23.500M108.500 14V23.500M116.500 9V23.500M123.500 3V23.500" />
            <path stroke="#fff" stroke-width="2.500" d="M132.500 9V18" />
            <rect x="137.500" y="4" width="31" height="17.500" rx="4.500" stroke="#fff" stroke-width="2.500" />
            <rect x="151" y="6" width="15.500" height="13.500" rx="2" fill="#5b5f66" />
            <text x="153" y="18" text-anchor="middle" font-size="15" font-family="Roboto, sans-serif" font-weight="700" fill="#fff">56</text>
          </svg>
        </div>
        <header class="header">
          <button type="button" aria-label="Back">
            <svg width="32" height="32" viewBox="0 0 32 32" fill="none" stroke="#f7f8fa" stroke-width="4"><path d="M32 16H4M17.500 1.500L3 16L17.500 30.500" /></svg>
          </button>
          <svg class="avatar" viewBox="0 0 72 72" role="img" aria-label="Profile photo">
            <defs><clipPath id="round"><circle cx="36" cy="36" r="36" /></clipPath></defs>
            <g clip-path="url(#round)">
              <rect width="72" height="72" fill="#627983" />
              <circle cx="36" cy="31.500" r="12.300" fill="#d2d7d9" />
              <path d="M13 62Q16 48 36 48Q56 48 59 62Q50 72 36 71.500Q22 72 13 62Z" fill="#d2d7d9" />
            </g>
          </svg>
          <h1 class="name">Batool</h1>
          <div class="calls">
            <button type="button" aria-label="Video call">
              <svg width="40" height="32" viewBox="0 0 40 32"><rect x="2" y="2" width="28" height="28" rx="2" fill="none" stroke="#f7f8fa" stroke-width="4" /><path fill="#f7f8fa" d="M31 14L40 6.500V25.500L31 18Z" /></svg>
            </button>
            <button type="button" aria-label="Voice call">
              <svg width="36" height="36" viewBox="3 3 18 18" fill="#f7f8fa"><path d="M6.540 5c.06.89.21 1.760.45 2.590l-1.200 1.200c-.41-1.200-.67-2.470-.76-3.790h1.510m9.860 12.020c.85.24 1.720.39 2.600.45v1.490c-1.320-.09-2.590-.35-3.800-.75l1.200-1.190M7.500 3H4c-.55 0-1 .45-1 1 0 9.390 7.610 17 17 17 .55 0 1-.45 1-1v-3.490c0-.55-.45-1-1-1-1.240 0-2.450-.2-3.570-.57-.1-.04-.21-.05-.31-.05-.26 0-.51.1-.71.29l-2.200 2.200c-2.830-1.450-5.150-3.760-6.590-6.590l2.200-2.200c.28-.28.36-.67.25-1.020C8.700 6.450 8.500 5.250 8.500 4c0-.55-.45-1-1-1z" /></svg>
            </button>
            <button type="button" aria-label="More options">
              <svg width="16" height="32" viewBox="0 0 16 32" fill="#f7f8fa"><circle cx="8" cy="4" r="4.200" /><circle cx="8" cy="16" r="4.200" /><circle cx="8" cy="28" r="4.200" /></svg>
            </button>
          </div>
        </header>
      </div>

      <main class="chat">
        <chat-wallpaper></chat-wallpaper>
        <div class="list">
          ${MESSAGES.map((m) => html`<chat-bubble class=${m.first ? "lead" : ""} .message=${m}></chat-bubble>`)}
        </div>
        <div class="composer">
          <div class="field">
            <button type="button" aria-label="Stickers">
              <svg width="40" height="40" viewBox="0 0 40 40" fill="none" stroke="#8d9598" stroke-width="4">
                <path d="M13 2H27Q38 2 38 13V21Q38 23 36.500 24.500L24.500 36.500Q23 38 21 38H13Q2 38 2 27V13Q2 2 13 2Z" />
                <path stroke-width="3.500" d="M22 38V31Q22 22 31 22H38" />
                <g fill="#8d9598" stroke="none"><circle cx="13" cy="13.500" r="3.200" /><circle cx="27" cy="13.500" r="3.200" /><path d="M11 22.500H28L21 29Q14 29 11 22.500Z" /></g>
              </svg>
            </button>
            <span class="caret"></span>
            <input class="entry" type="text" placeholder="Message" aria-label="Message" />
            <button type="button" aria-label="Attach">
              <svg width="26" height="40" viewBox="0 0 26 40" fill="none" stroke="#8d9598" stroke-width="3.600"><path d="M23.700 8V27Q23.700 38.200 12.800 38.200Q1.800 38.200 1.800 27V10Q1.800 1.800 9.300 1.800Q17 1.800 17 10V26Q17 30.200 12.800 30.200Q8.700 30.200 8.700 26V8" /></svg>
            </button>
            <button class="camera" type="button" aria-label="Camera">
              <svg width="40" height="36" viewBox="0 0 40 36" fill="none" stroke="#8d9598" stroke-width="4"><path stroke-linejoin="round" d="M2 6H10.500L14 2H26L29.500 6H38V34H2Z" /><circle cx="20" cy="20" r="7" /></svg>
            </button>
          </div>
          <button class="mic" type="button" aria-label="Record voice message">
            <svg width="28" height="38" viewBox="0 0 28 38" fill="none" stroke="#0b1014" stroke-width="4"><rect x="8" y="0" width="12" height="24" rx="6" fill="#0b1014" stroke="none" /><path stroke-linecap="round" d="M2 20Q3 30.500 14 30.500Q25 30.500 26 20" /><path d="M14 30V38" /></svg>
          </button>
        </div>
        <button class="jump" type="button" aria-label="Scroll to latest">
          <svg width="24" height="26" viewBox="0 0 24 26" fill="none" stroke="#8d9598" stroke-width="3.600"><path d="M1.500 1.500L12 11.500L22.500 1.500M1.500 13.500L12 23.500L22.500 13.500" /></svg>
        </button>
      </main>

      <nav class="nav" aria-label="System">
        <button type="button" aria-label="Recent apps"><svg width="32" height="32" viewBox="0 0 32 32" fill="none" stroke="#fff" stroke-width="4"><rect x="2" y="2" width="28" height="28" rx="7" /></svg></button>
        <button type="button" aria-label="Home"><svg width="36" height="36" viewBox="0 0 36 36" fill="none" stroke="#fff" stroke-width="4"><circle cx="18" cy="18" r="16" /></svg></button>
        <button type="button" aria-label="Back"><svg width="32" height="36" viewBox="0 0 32 36" fill="none" stroke="#fff" stroke-width="4"><path d="M3.500 15.500L22 3.500Q29 0 29 6V30Q29 36 22 32.500L3.500 20.500Q1 18 3.500 15.500Z" /></svg></button>
      </nav>
    `;
  }
}
